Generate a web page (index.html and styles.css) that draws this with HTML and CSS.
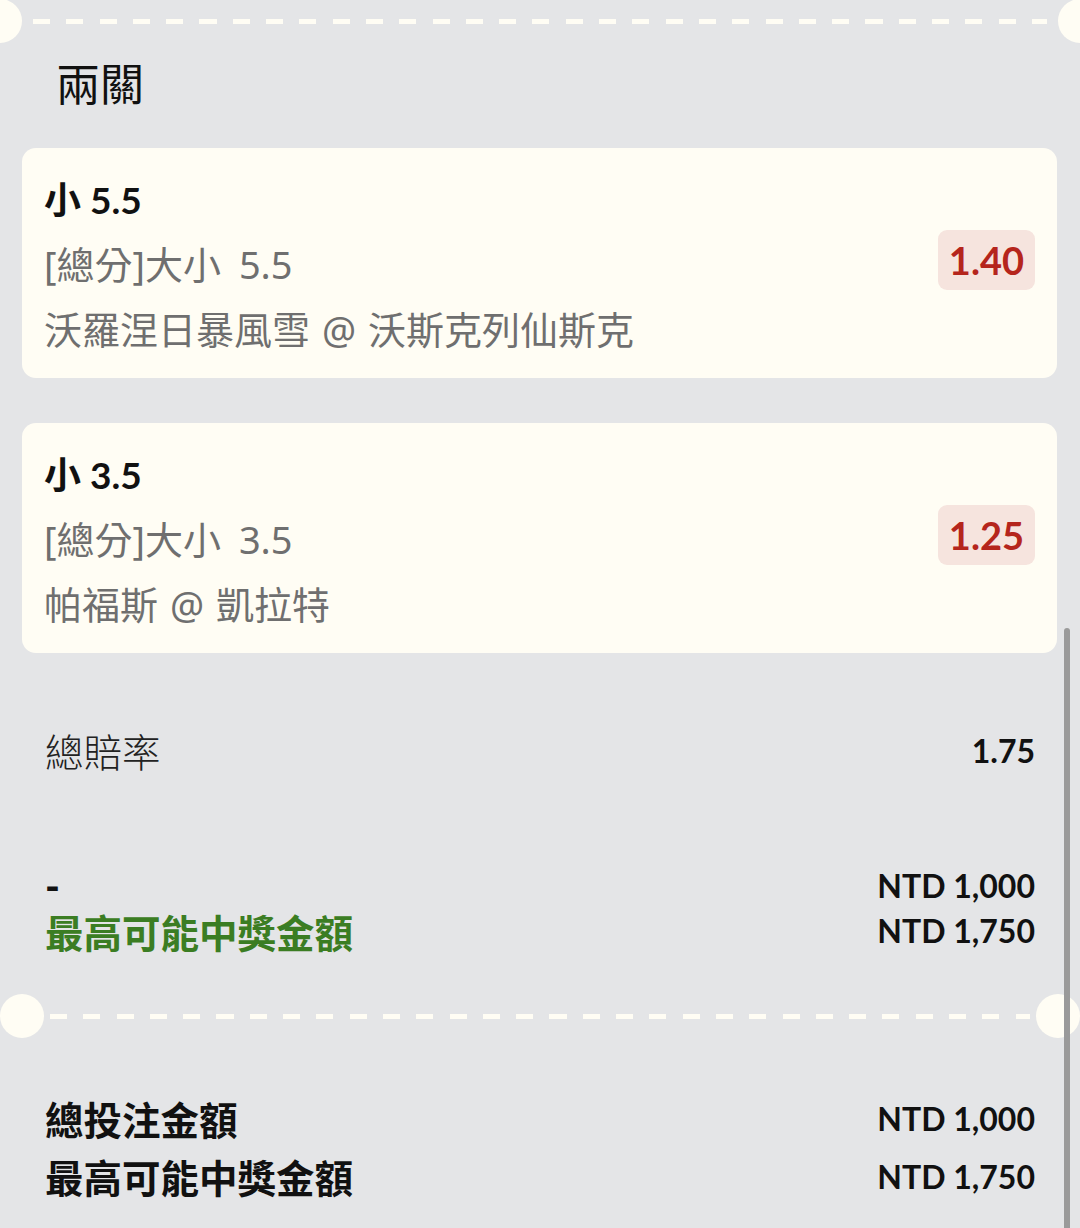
FILE: index.html
```html
<!DOCTYPE html>
<html lang="zh-Hant">
<head>
    <meta charset="UTF-8">
    <meta name="viewport" content="width=device-width, initial-scale=1.0">
    <title>兩關</title>
    <link rel="stylesheet" href="styles.css">
</head>
<body>

    <div class="divider divider-top">
        <span class="hole"></span>
        <span class="dashes"></span>
        <span class="hole"></span>
    </div>

    <h1 class="slip-title">兩關</h1>

    <div class="legs">
        <div class="leg">
            <div class="leg-info">
                <div class="leg-pick">小 5.5</div>
                <div class="leg-market">[總分]大小 5.5</div>
                <div class="leg-match">沃羅涅日暴風雪 @ 沃斯克列仙斯克</div>
            </div>
            <div class="odds">1.40</div>
        </div>

        <div class="leg">
            <div class="leg-info">
                <div class="leg-pick">小 3.5</div>
                <div class="leg-market">[總分]大小 3.5</div>
                <div class="leg-match">帕福斯 @ 凱拉特</div>
            </div>
            <div class="odds">1.25</div>
        </div>
    </div>

    <div class="row total-odds">
        <span class="label">總賠率</span>
        <span class="value">1.75</span>
    </div>

    <div class="stake">
        <div class="row">
            <span class="dash">-</span>
            <span class="value">NTD 1,000</span>
        </div>
        <div class="row">
            <span class="label win">最高可能中獎金額</span>
            <span class="value">NTD 1,750</span>
        </div>
    </div>

    <div class="divider divider-bottom">
        <span class="hole"></span>
        <span class="dashes"></span>
        <span class="hole"></span>
    </div>

    <div class="summary">
        <div class="row">
            <span class="label">總投注金額</span>
            <span class="value">NTD 1,000</span>
        </div>
        <div class="row">
            <span class="label">最高可能中獎金額</span>
            <span class="value">NTD 1,750</span>
        </div>
    </div>

    <div class="scrollbar"></div>

</body>
</html>
```

FILE: styles.css
```css
body {
    margin: 0;
    width: 1080px;
    height: 1228px;
    overflow: hidden;
    position: relative;
    background-color: #e4e5e7;
    font-family: Lato, "Noto Sans CJK TC", sans-serif;
    color: #111;
}

/* ticket perforation */
.divider {
    display: flex;
    align-items: center;
    height: 44px;
}
.hole {
    flex: none;
    width: 44px;
    height: 44px;
    border-radius: 50%;
    background-color: #fffdf4;
}
.dashes {
    flex: 1;
    height: 5px;
    background: repeating-linear-gradient(90deg, #fffdf4 0 17px, transparent 17px 33.3px);
}
.divider-top {
    margin: -1px -22px 0;
}
.divider-top .dashes {
    margin: 0 11px;
}
.divider-bottom {
    margin-top: 41px;
}
.divider-bottom .dashes {
    margin: 0 6px;
}

.slip-title {
    margin: 11px 0 0;
    padding-left: 56px;
    font-family: "Noto Sans CJK TC", sans-serif;
    font-size: 44px;
    font-weight: 400;
    line-height: 56px;
}

.legs {
    display: flex;
    flex-direction: column;
    gap: 45px;
    margin: 38px 23px 0 22px;
}
.leg {
    display: flex;
    align-items: center;
    justify-content: space-between;
    background-color: #fffdf4;
    border-radius: 14px;
    padding: 19px 22px 16px 22px;
}
.leg-info {
    line-height: 65px;
}
.leg-pick {
    font-size: 37px;
    font-weight: 700;
}
.leg-market,
.leg-match {
    font-family: "Noto Sans", "Noto Sans CJK TC", sans-serif;
    font-size: 38px;
    color: #6f6f6f;
}
.leg-market {
    word-spacing: 8px;
}
.leg-match {
    word-spacing: 2px;
}
.odds {
    margin-top: -10px;
    padding: 0 11px;
    height: 60px;
    line-height: 60px;
    border-radius: 9px;
    background-color: #f6e4de;
    color: #b5251c;
    font-size: 38px;
    font-weight: 700;
}

.row {
    display: flex;
    justify-content: space-between;
    align-items: center;
    padding: 0 45px;
}
.label {
    font-size: 38.5px;
}
.value {
    font-size: 32px;
    font-weight: 700;
}
.total-odds {
    margin-top: 72px;
    height: 50px;
}
.total-odds .label {
    color: #222;
    font-weight: 300;
}
.stake {
    margin-top: 88px;
}
.stake .row {
    height: 45px;
}
.dash {
    font-size: 40px;
    font-weight: 900;
}
.win {
    color: #3b7d23;
    font-weight: 700;
}

.summary {
    margin-top: 51px;
}
.summary .row {
    height: 58px;
}
.summary .label {
    font-weight: 700;
}

.scrollbar {
    position: absolute;
    left: 1064px;
    top: 628px;
    width: 6px;
    height: 620px;
    border-radius: 3px;
    background-color: #9a9a9a;
}
```
